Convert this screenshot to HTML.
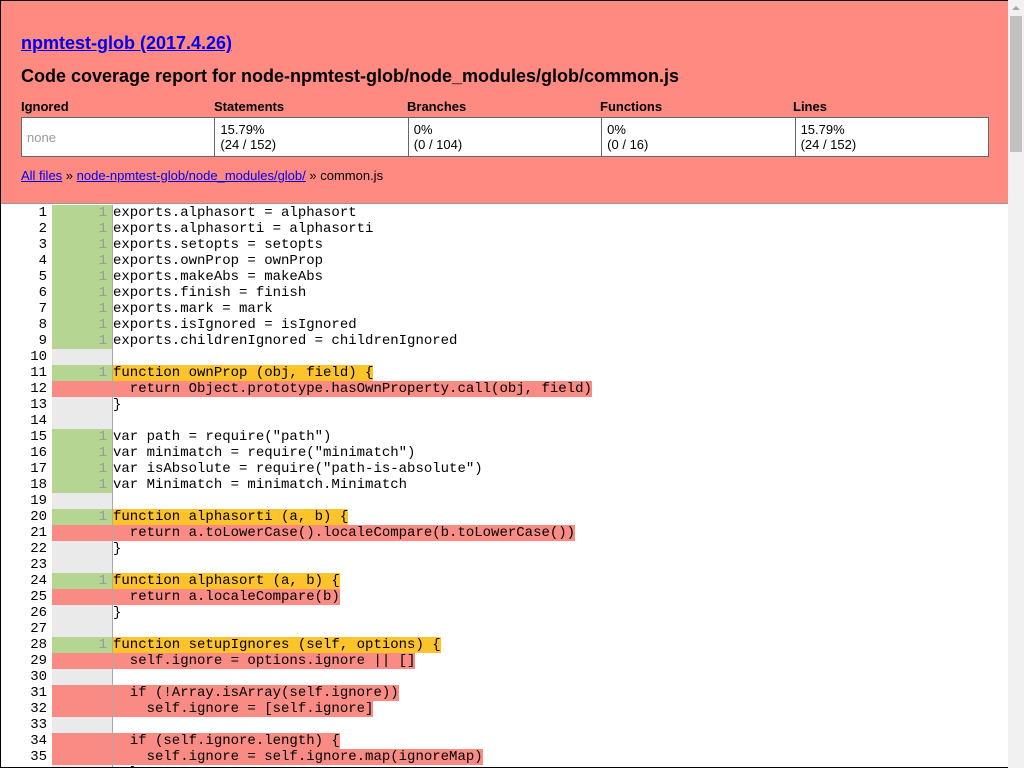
<!DOCTYPE html>
<html><head><meta charset="utf-8"><style>
html,body{margin:0;padding:0;width:1024px;height:768px;overflow:hidden;background:#fff;}
#wrap{position:absolute;left:0;top:0;width:1007px;height:766px;border:1px solid #000;border-right:none;overflow:hidden;font-family:"Liberation Sans",sans-serif;}
#hdr{background:#ff8a82;height:202px;border-bottom:1px solid #999;position:relative;}
h1{position:absolute;left:20px;top:32px;margin:0;font-size:18px;font-weight:bold;}
h1 a{color:#00e;}
h2{position:absolute;left:20px;top:65px;margin:0;font-size:18px;font-weight:bold;color:#000;}
.th{position:absolute;top:98px;font-size:13px;font-weight:bold;}
table.s{position:absolute;left:20px;top:116px;border-collapse:collapse;table-layout:fixed;width:968px;}
table.s td{border:1px solid #666;background:#fff;height:39px;padding:0 5px;font-size:13px;line-height:15px;vertical-align:middle;box-sizing:border-box;}
.crumb{position:absolute;left:20px;top:167px;font-size:13px;}
.crumb a{color:#00e;}
#code{position:absolute;top:204px;left:0;font-family:"Liberation Mono",monospace;font-size:14px;}
.r{height:16px;line-height:16px;white-space:pre;position:relative;}
.n{position:absolute;left:0;width:46px;text-align:right;}
.c{position:absolute;left:51px;width:55px;padding-right:5px;height:16px;text-align:right;color:#999;border-right:1px solid #aaa;font-size:14px;}
.g{background:#b5d592;}.e{background:#eaeaea;}.x{background:#f98b84;}
.t{position:absolute;left:112px;}
.y{background:#fdc32a;}.p{background:#f98b84;}
#sbar{position:absolute;left:1008px;top:0;width:16px;height:768px;background:#f1f1f1;z-index:5;}
#sthumb{position:absolute;left:2px;top:16px;width:12px;height:136px;background:#c1c1c1;}
#sarrow{position:absolute;left:4px;top:6px;width:0;height:0;border-left:4px solid transparent;border-right:4px solid transparent;border-bottom:4px solid #a3a3a3;}
</style></head><body>
<div id="wrap">
<div id="hdr">
<h1><a href="#">npmtest-glob (2017.4.26)</a></h1>
<h2>Code coverage report for node-npmtest-glob/node_modules/glob/common.js</h2>
<div class="th" style="left:20px">Ignored</div>
<div class="th" style="left:213px">Statements</div>
<div class="th" style="left:406px">Branches</div>
<div class="th" style="left:599px">Functions</div>
<div class="th" style="left:792px">Lines</div>
<table class="s"><tr>
<td style="color:#999">none</td>
<td>15.79%<br>(24 / 152)</td>
<td>0%<br>(0 / 104)</td>
<td>0%<br>(0 / 16)</td>
<td>15.79%<br>(24 / 152)</td>
</tr></table>
<div class="crumb"><a href="#">All files</a> » <a href="#">node-npmtest-glob/node_modules/glob/</a> » common.js</div>
</div>
<div id="code">
<div class="r"><span class="n">1</span><span class="c g">1</span><span class="t">exports.alphasort = alphasort</span></div>
<div class="r"><span class="n">2</span><span class="c g">1</span><span class="t">exports.alphasorti = alphasorti</span></div>
<div class="r"><span class="n">3</span><span class="c g">1</span><span class="t">exports.setopts = setopts</span></div>
<div class="r"><span class="n">4</span><span class="c g">1</span><span class="t">exports.ownProp = ownProp</span></div>
<div class="r"><span class="n">5</span><span class="c g">1</span><span class="t">exports.makeAbs = makeAbs</span></div>
<div class="r"><span class="n">6</span><span class="c g">1</span><span class="t">exports.finish = finish</span></div>
<div class="r"><span class="n">7</span><span class="c g">1</span><span class="t">exports.mark = mark</span></div>
<div class="r"><span class="n">8</span><span class="c g">1</span><span class="t">exports.isIgnored = isIgnored</span></div>
<div class="r"><span class="n">9</span><span class="c g">1</span><span class="t">exports.childrenIgnored = childrenIgnored</span></div>
<div class="r"><span class="n">10</span><span class="c e"></span><span class="t"></span></div>
<div class="r"><span class="n">11</span><span class="c g">1</span><span class="t y">function ownProp (obj, field) {</span></div>
<div class="r"><span class="n">12</span><span class="c x"></span><span class="t p">  return Object.prototype.hasOwnProperty.call(obj, field)</span></div>
<div class="r"><span class="n">13</span><span class="c e"></span><span class="t">}</span></div>
<div class="r"><span class="n">14</span><span class="c e"></span><span class="t"></span></div>
<div class="r"><span class="n">15</span><span class="c g">1</span><span class="t">var path = require("path")</span></div>
<div class="r"><span class="n">16</span><span class="c g">1</span><span class="t">var minimatch = require("minimatch")</span></div>
<div class="r"><span class="n">17</span><span class="c g">1</span><span class="t">var isAbsolute = require("path-is-absolute")</span></div>
<div class="r"><span class="n">18</span><span class="c g">1</span><span class="t">var Minimatch = minimatch.Minimatch</span></div>
<div class="r"><span class="n">19</span><span class="c e"></span><span class="t"></span></div>
<div class="r"><span class="n">20</span><span class="c g">1</span><span class="t y">function alphasorti (a, b) {</span></div>
<div class="r"><span class="n">21</span><span class="c x"></span><span class="t p">  return a.toLowerCase().localeCompare(b.toLowerCase())</span></div>
<div class="r"><span class="n">22</span><span class="c e"></span><span class="t">}</span></div>
<div class="r"><span class="n">23</span><span class="c e"></span><span class="t"></span></div>
<div class="r"><span class="n">24</span><span class="c g">1</span><span class="t y">function alphasort (a, b) {</span></div>
<div class="r"><span class="n">25</span><span class="c x"></span><span class="t p">  return a.localeCompare(b)</span></div>
<div class="r"><span class="n">26</span><span class="c e"></span><span class="t">}</span></div>
<div class="r"><span class="n">27</span><span class="c e"></span><span class="t"></span></div>
<div class="r"><span class="n">28</span><span class="c g">1</span><span class="t y">function setupIgnores (self, options) {</span></div>
<div class="r"><span class="n">29</span><span class="c x"></span><span class="t p">  self.ignore = options.ignore || []</span></div>
<div class="r"><span class="n">30</span><span class="c e"></span><span class="t"></span></div>
<div class="r"><span class="n">31</span><span class="c x"></span><span class="t p">  if (!Array.isArray(self.ignore))</span></div>
<div class="r"><span class="n">32</span><span class="c x"></span><span class="t p">    self.ignore = [self.ignore]</span></div>
<div class="r"><span class="n">33</span><span class="c e"></span><span class="t"></span></div>
<div class="r"><span class="n">34</span><span class="c x"></span><span class="t p">  if (self.ignore.length) {</span></div>
<div class="r"><span class="n">35</span><span class="c x"></span><span class="t p">    self.ignore = self.ignore.map(ignoreMap)</span></div>
<div class="r"><span class="n">36</span><span class="c e"></span><span class="t">  }</span></div>
</div>
</div>
<div id="sbar"><div id="sarrow"></div><div id="sthumb"></div></div>
</body></html>
